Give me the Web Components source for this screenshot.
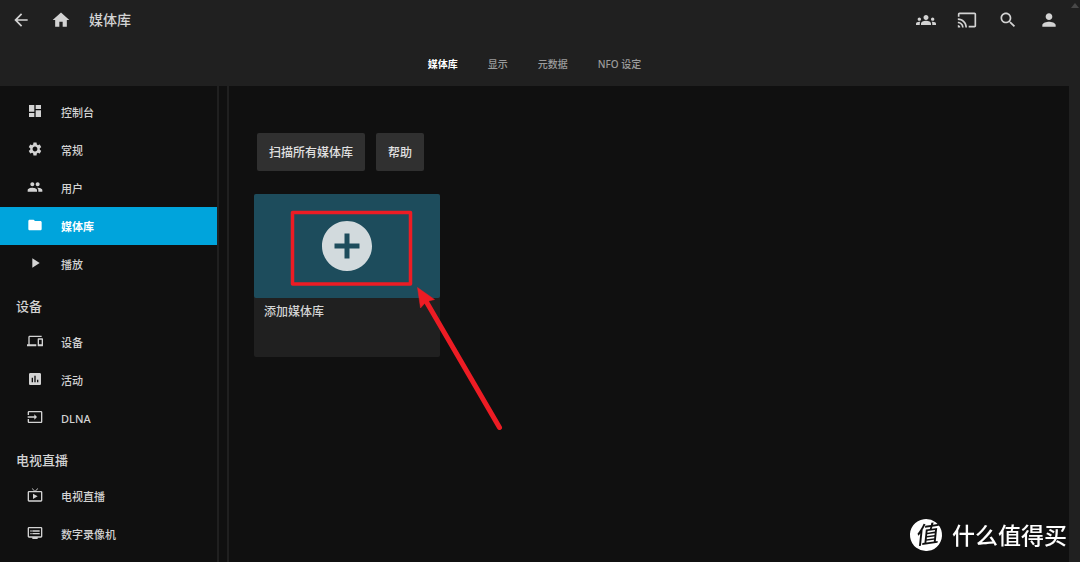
<!DOCTYPE html>
<html lang="zh-CN">
<head>
<meta charset="utf-8">
<meta name="viewport" content="width=device-width, initial-scale=1">
<title>媒体库</title>
<style>
  :root {
    --bar: #202020;
    --page: #101010;
    --text: #d3d3d3;
    --accent: #00a4dc;
    --mark: #ed1c24;
  }
  html { background: var(--page); }
  body {
    margin: 0;
    color: var(--text);
    font-family: "Noto Sans", "Noto Sans CJK SC", sans-serif;
    font-weight: 500;
  }
</style>
</head>
<body>
<media-app>
  <app-header slot="header" heading="媒体库">
    <tab-link current>媒体库</tab-link>
    <tab-link>显示</tab-link>
    <tab-link>元数据</tab-link>
    <tab-link>NFO 设定</tab-link>
  </app-header>
  <side-nav slot="nav">
    <nav-section>
      <nav-item icon="dashboard">控制台</nav-item>
      <nav-item icon="settings">常规</nav-item>
      <nav-item icon="people">用户</nav-item>
      <nav-item icon="folder" current>媒体库</nav-item>
      <nav-item icon="play">播放</nav-item>
    </nav-section>
    <nav-section heading="设备">
      <nav-item icon="devices">设备</nav-item>
      <nav-item icon="chart">活动</nav-item>
      <nav-item icon="input">DLNA</nav-item>
    </nav-section>
    <nav-section heading="电视直播">
      <nav-item icon="livetv">电视直播</nav-item>
      <nav-item icon="dvr">数字录像机</nav-item>
    </nav-section>
  </side-nav>
  <library-page>
    <action-button slot="actions">扫描所有媒体库</action-button>
    <action-button slot="actions">帮助</action-button>
    <library-card>添加媒体库<click-hint slot="hint"></click-hint></library-card>
  </library-page>
</media-app>
<site-mark badge="值">什么值得买</site-mark>

<script>
const ICONS = {
  back: 'M20 11H7.83l5.59-5.59L12 4l-8 8 8 8 1.41-1.41L7.83 13H20v-2z',
  home: 'M10 20v-6h4v6h5v-8h3L12 3 2 12h3v8z',
  groups: 'M12 12.75c1.63 0 3.07.39 4.24.9 1.08.48 1.76 1.56 1.76 2.73V18H6v-1.61c0-1.18.68-2.26 1.76-2.73 1.17-.52 2.61-.91 4.24-.91zM4 13c1.1 0 2-.9 2-2s-.9-2-2-2-2 .9-2 2 .9 2 2 2zm1.13 1.1c-.37-.06-.74-.1-1.13-.1-.99 0-1.93.21-2.78.58C.48 14.9 0 15.62 0 16.43V18h4.5v-1.61c0-.83.23-1.61.63-2.29zM20 13c1.1 0 2-.9 2-2s-.9-2-2-2-2 .9-2 2 .9 2 2 2zm4 3.43c0-.81-.48-1.53-1.22-1.85-.85-.37-1.79-.58-2.78-.58-.39 0-.76.04-1.13.1.4.68.63 1.46.63 2.29V18H24v-1.57zM12 6c1.66 0 3 1.34 3 3s-1.34 3-3 3-3-1.34-3-3 1.34-3 3-3z',
  cast: 'M21 3H3c-1.1 0-2 .9-2 2v3h2V5h18v14h-7v2h7c1.1 0 2-.9 2-2V5c0-1.1-.9-2-2-2zM1 18v3h3c0-1.66-1.34-3-3-3zm0-4v2c2.76 0 5 2.24 5 5h2c0-3.87-3.13-7-7-7zm0-4v2c4.97 0 9 4.03 9 9h2c0-6.08-4.93-11-11-11z',
  search: 'M15.5 14h-.79l-.28-.27C15.41 12.59 16 11.11 16 9.5 16 5.91 13.09 3 9.5 3S3 5.91 3 9.5 5.91 16 9.5 16c1.61 0 3.09-.59 4.23-1.57l.27.28v.79l5 4.99L20.49 19l-4.99-5zm-6 0C7.01 14 5 11.99 5 9.5S7.01 5 9.5 5 14 7.01 14 9.5 11.99 14 9.5 14z',
  person: 'M12 12c2.21 0 4-1.79 4-4s-1.79-4-4-4-4 1.79-4 4 1.79 4 4 4zm0 2c-2.67 0-8 1.34-8 4v2h16v-2c0-2.66-5.33-4-8-4z',
  dashboard: 'M3 13h8V3H3v10zm0 8h8v-6H3v6zm10 0h8V11h-8v10zm0-18v6h8V3h-8z',
  settings: 'M19.14 12.94c.04-.3.06-.61.06-.94 0-.32-.02-.64-.07-.94l2.03-1.58c.18-.14.23-.41.12-.61l-1.92-3.32c-.12-.22-.37-.29-.59-.22l-2.39.96c-.5-.38-1.03-.7-1.62-.94l-.36-2.54c-.04-.24-.24-.41-.48-.41h-3.84c-.24 0-.43.17-.47.41l-.36 2.54c-.59.24-1.13.57-1.62.94l-2.39-.96c-.22-.08-.47 0-.59.22L2.74 8.87c-.12.21-.08.47.12.61l2.03 1.58c-.05.3-.09.63-.09.94s.02.64.07.94l-2.03 1.58c-.18.14-.23.41-.12.61l1.92 3.32c.12.22.37.29.59.22l2.39-.96c.5.38 1.03.7 1.62.94l.36 2.54c.05.24.24.41.48.41h3.84c.24 0 .44-.17.47-.41l.36-2.54c.59-.24 1.13-.56 1.62-.94l2.39.96c.22.08.47 0 .59-.22l1.92-3.32c.12-.22.07-.47-.12-.61l-2.01-1.58zM12 15.6c-1.98 0-3.6-1.62-3.6-3.6s1.62-3.6 3.6-3.6 3.6 1.62 3.6 3.6-1.62 3.6-3.6 3.6z',
  people: 'M16 11c1.66 0 2.99-1.34 2.99-3S17.66 5 16 5s-3 1.34-3 3 1.34 3 3 3zm-8 0c1.66 0 2.99-1.34 2.99-3S9.66 5 8 5 5 6.34 5 8s1.34 3 3 3zm0 2c-2.33 0-7 1.17-7 3.5V19h14v-2.5c0-2.33-4.67-3.5-7-3.5zm8 0c-.29 0-.62.02-.97.05 1.16.84 1.97 1.97 1.97 3.45V19h6v-2.5c0-2.33-4.67-3.5-7-3.5z',
  folder: 'M10 4H4c-1.1 0-1.99.9-1.99 2L2 18c0 1.1.9 2 2 2h16c1.1 0 2-.9 2-2V8c0-1.1-.9-2-2-2h-8l-2-2z',
  play: 'M8 5v14l11-7z',
  devices: 'M4 6h18V4H4c-1.1 0-2 .9-2 2v11H0v3h14v-3H4V6zm19 2h-6c-.55 0-1 .45-1 1v10c0 .55.45 1 1 1h6c.55 0 1-.45 1-1V9c0-.55-.45-1-1-1zm-1 9h-4v-7h4v7z',
  chart: 'M19 3H5c-1.1 0-2 .9-2 2v14c0 1.1.9 2 2 2h14c1.1 0 2-.9 2-2V5c0-1.1-.9-2-2-2zM9 17H7v-7h2v7zm4 0h-2V7h2v10zm4 0h-2v-4h2v4z',
  input: 'M21 3.01H3c-1.1 0-2 .9-2 2V9h2V4.99h18v14.03H3V15H1v4.01c0 1.1.9 1.98 2 1.98h18c1.1 0 2-.88 2-1.98v-14c0-1.11-.9-2-2-2zM11 16l4-4-4-4v3H1v2h10v3z',
  livetv: 'M21 6h-7.59l3.29-3.29L16 2l-4 4-4-4-.7.71L10.59 6H3c-1.1 0-2 .89-2 2v12c0 1.1.9 2 2 2h18c1.1 0 2-.9 2-2V8c0-1.11-.9-2-2-2zm0 14H3V8h18v12zM9 10v8l7-4z',
  dvr: 'M21 3H3c-1.1 0-2 .9-2 2v12c0 1.1.9 2 2 2h5v2h8v-2h5c1.1 0 1.99-.9 1.99-2L23 5c0-1.1-.9-2-2-2zm0 14H3V5h18v12zm-2-9H8v2h11V8zm0 4H8v2h11v-2zM7 8H5v2h2V8zm0 4H5v2h2v-2z',
  add: 'M12 2C6.48 2 2 6.48 2 12s4.48 10 10 10 10-4.48 10-10S17.52 2 12 2zm5 11h-4v4h-2v-4H7v-2h4V7h2v4h4v2z'
};

function define(name, render) {
  customElements.define(name, class extends HTMLElement {
    constructor() {
      super();
      this.attachShadow({ mode: 'open' });
    }
    connectedCallback() {
      const template = document.createElement('template');
      template.innerHTML = render(this);
      this.shadowRoot.replaceChildren(template.content.cloneNode(true));
    }
  });
}

define('md-icon', el => `
  <style>
    :host { display: block; flex: none; width: var(--icon-size, 20px); height: var(--icon-size, 20px); }
    svg { display: block; width: 100%; height: 100%; fill: currentColor; }
  </style>
  <svg viewBox="0 0 24 24" aria-hidden="true"><path d="${ICONS[el.getAttribute('name')]}"/></svg>`);

define('icon-button', el => `
  <style>
    :host { display: block; }
    button { display: block; padding: 10px; border: 0; background: none; color: inherit; cursor: pointer; }
  </style>
  <button type="button" aria-label="${el.getAttribute('label')}"><md-icon name="${el.getAttribute('icon')}"></md-icon></button>`);

define('tab-link', el => `
  <style>
    :host { display: block; }
    a { display: block; padding: 0 15px; font-size: 10px; line-height: 44px; text-decoration: none; color: #9c9c9c; }
    a[aria-current] { color: #fff; font-weight: 700; }
  </style>
  <a href="#" ${el.hasAttribute('current') ? 'aria-current="page"' : ''}><slot></slot></a>`);

define('app-header', el => `
  <style>
    :host { display: block; background: var(--bar); }
    .top { display: flex; align-items: center; height: 40px; padding: 0 11px 0 1px; }
    h1 { flex: 1; margin: 0; padding-left: 8px; font-size: 14px; line-height: 40px; font-weight: 500; }
    .tools { display: flex; gap: 1px; }
    nav { display: flex; justify-content: center; height: 46px; padding: 2px 11px 0 0; box-sizing: border-box; }
  </style>
  <div class="top">
    <icon-button icon="back" label="返回"></icon-button>
    <icon-button icon="home" label="首页"></icon-button>
    <h1>${el.getAttribute('heading')}</h1>
    <div class="tools">
      <icon-button icon="groups" label="同步播放"></icon-button>
      <icon-button icon="cast" label="投放"></icon-button>
      <icon-button icon="search" label="搜索"></icon-button>
      <icon-button icon="person" label="用户"></icon-button>
    </div>
  </div>
  <nav><slot></slot></nav>`);

define('nav-item', el => `
  <style>
    :host { display: block; --icon-size: 16px; }
    a { display: flex; align-items: center; gap: 18px; height: 38px; padding-left: 27px; font-size: 11px; text-decoration: none; color: inherit; }
    a[aria-current] { background: var(--accent); color: #fff; font-weight: 700; }
    md-icon { padding-bottom: 2px; }
    span { line-height: 16px; padding-top: 2px; }
  </style>
  <a href="#" ${el.hasAttribute('current') ? 'aria-current="page"' : ''}><md-icon name="${el.getAttribute('icon')}"></md-icon><span><slot></slot></span></a>`);

define('nav-section', el => `
  <style>
    :host { display: block; }
    h2 { margin: 0; padding: 6px 16px 0; font-size: 13px; line-height: 34px; font-weight: 500; }
  </style>
  ${el.hasAttribute('heading') ? `<h2>${el.getAttribute('heading')}</h2>` : ''}
  <slot></slot>`);

define('side-nav', () => `
  <style>
    :host { display: block; padding-top: 7px; border-right: 2px solid var(--bar); }
  </style>
  <nav><slot></slot></nav>`);

define('action-button', () => `
  <style>
    :host { display: block; }
    button { height: 38px; padding: 0 12px; border: 0; border-radius: 2px; background: #303030; color: #e0e0e0; font: inherit; font-size: 12px; cursor: pointer; }
  </style>
  <button type="button"><slot></slot></button>`);

define('click-hint', () => `
  <style>
    /* Callout drawn over the card: a frame round the plus, and an arrow to it. */
    :host { position: absolute; left: 0; top: 0; pointer-events: none; }
    svg { display: block; }
  </style>
  <svg width="260" height="250" viewBox="0 0 520 500" fill="none" stroke="var(--mark)" aria-hidden="true">
    <rect x="77" y="37" width="236" height="143" stroke-width="7" stroke-linejoin="round"/>
    <path d="M345 216 491 467" stroke-width="10" stroke-linecap="round"/>
    <path d="M327 187 361 211 350 214 342 218 333 228z" fill="var(--mark)" stroke-width="1"/>
  </svg>`);

define('library-card', () => `
  <style>
    :host { display: block; position: relative; width: 186px; }
    button { display: block; width: 100%; padding: 0; border: 0; border-radius: 2px; background: var(--bar); color: inherit; font: inherit; text-align: left; cursor: pointer; }
    .cover { display: grid; place-items: center; height: 104px; border-radius: 2px; background: #1d4c5c; color: #d2dadd; --icon-size: 60px; }
    .label { display: block; height: 59px; padding: 4px 10px; box-sizing: border-box; font-size: 12px; line-height: 20px; }
  </style>
  <button type="button">
    <span class="cover"><md-icon name="add"></md-icon></span>
    <span class="label"><slot></slot></span>
  </button>
  <slot name="hint"></slot>`);

define('library-page', () => `
  <style>
    :host { display: block; padding: 47px 25px 24px; border-left: 2px solid var(--bar); }
    .actions { display: flex; flex-wrap: wrap; gap: 11px; padding: 0 3px; margin-bottom: 23px; }
    .cards { display: flex; flex-wrap: wrap; gap: 12px; }
  </style>
  <div class="actions"><slot name="actions"></slot></div>
  <div class="cards"><slot></slot></div>`);

define('media-app', () => `
  <style>
    :host { display: grid; grid-template-rows: auto 1fr; min-height: 100vh; position: relative; }
    .body { display: grid; grid-template-columns: 219px 1fr 11px; }
    main { display: grid; padding-left: 8px; }
    .track { background: var(--bar); }
    .up { position: absolute; right: 1px; top: 3px; border: 4px solid transparent; border-top: 0; border-bottom: 5px solid #484848; }
  </style>
  <slot name="header"></slot>
  <div class="body">
    <slot name="nav"></slot>
    <main><slot></slot></main>
    <div class="track"></div>
  </div>
  <div class="up"></div>`);

define('site-mark', el => `
  <style>
    :host { position: fixed; right: 13px; bottom: 11px; display: flex; align-items: center; gap: 10px; color: #fff; font-size: 23px; line-height: 32px; pointer-events: none; }
    b { display: block; width: 32px; height: 32px; border-radius: 50%; background: #fff; color: #101010; line-height: 30px; font-style: italic; font-weight: 500; text-align: center; transform: rotate(-8deg); }
  </style>
  <b>${el.getAttribute('badge')}</b><span><slot></slot></span>`);
</script>
</body>
</html>
